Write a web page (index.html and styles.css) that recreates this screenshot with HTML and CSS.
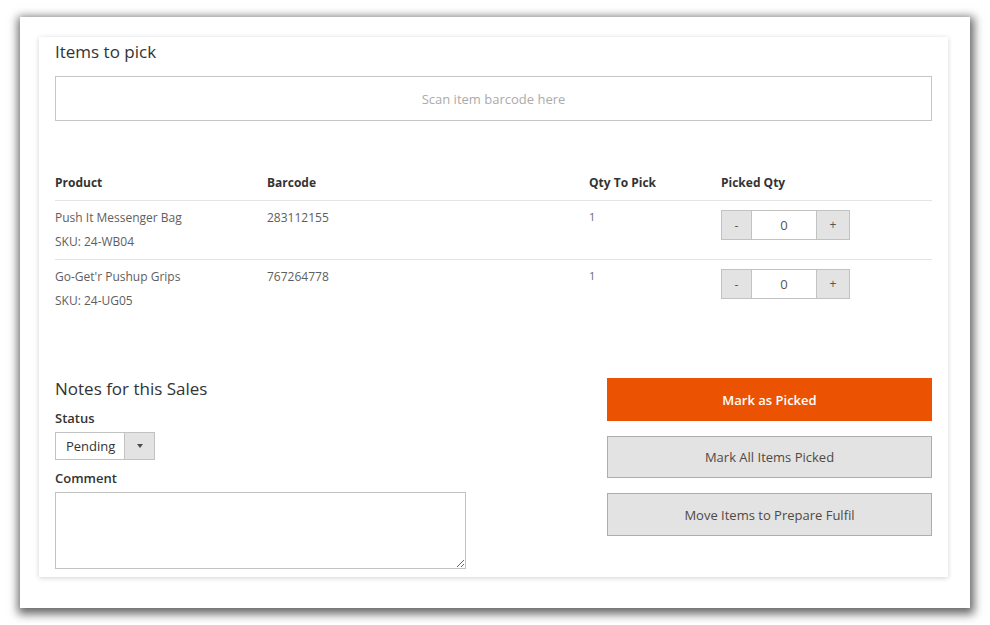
FILE: index.html
```html
<!DOCTYPE html>
<html lang="en">
<head>
<meta charset="utf-8">
<title>Items to pick</title>
<link rel="stylesheet" href="styles.css">
</head>
<body>
<div class="frame">
  <div class="card">
    <h2 class="title">Items to pick</h2>
    <input class="scan" type="text" placeholder="Scan item barcode here">

    <div class="items">
      <div class="th">Product</div>
      <div class="th">Barcode</div>
      <div class="th">Qty To Pick</div>
      <div class="th">Picked Qty</div>

      <div class="td first"><div>Push It Messenger Bag</div><div>SKU: 24-WB04</div></div>
      <div class="td first">283112155</div>
      <div class="td first qty">1</div>
      <div class="td first"><div class="stepper"><span class="step">-</span><span class="val">0</span><span class="step plus">+</span></div></div>

      <div class="td"><div>Go-Get'r Pushup Grips</div><div>SKU: 24-UG05</div></div>
      <div class="td">767264778</div>
      <div class="td qty">1</div>
      <div class="td"><div class="stepper"><span class="step">-</span><span class="val">0</span><span class="step plus">+</span></div></div>
    </div>

    <div class="bottom">
      <div class="notes">
        <h3 class="notes-title">Notes for this Sales</h3>
        <div class="label status-label">Status</div>
        <div class="select"><span class="select-text">Pending</span><span class="select-arrow"><i class="tri"></i></span></div>
        <div class="label comment-label">Comment</div>
        <textarea class="comment"></textarea>
      </div>
      <div class="actions">
        <button class="btn primary">Mark as Picked</button>
        <button class="btn mid">Mark All Items Picked</button>
        <button class="btn">Move Items to Prepare Fulfil</button>
      </div>
    </div>
  </div>
</div>
</body>
</html>
```

FILE: styles.css
```css
* { box-sizing: border-box; }
html, body { margin: 0; padding: 0; background: #ffffff; }
body {
  font-family: "Open Sans", "Liberation Sans", sans-serif;
  color: #333333;
  padding: 17px 20px 17px 20px;
  min-height: 625px;
}
.frame {
  width: 950px;
  height: 591px;
  background: #ffffff;
  box-shadow: 1px 3px 9px 3px rgba(0, 0, 0, 0.6);
  padding: 20px 22px 31px 19px;
}
.card {
  width: 909px;
  height: 540px;
  background: #ffffff;
  box-shadow: 0 1px 5px rgba(0, 0, 0, 0.18);
  padding: 5px 16px 8px 16px;
  display: flex;
  flex-direction: column;
}
.card > * { flex-shrink: 0; }
.title {
  margin: 0;
  font-size: 17px;
  line-height: 20px;
  font-weight: 400;
  color: #333333;
}
.scan {
  margin-top: 14px;
  width: 100%;
  height: 45px;
  border: 1px solid #c6c6c6;
  font-family: inherit;
  font-size: 13px;
  text-align: center;
  color: #333;
  outline: none;
}
.scan::placeholder { color: #ababab; }

.items {
  margin-top: 53px;
  display: grid;
  grid-template-columns: 212px 322px 132px 1fr;
}
.th {
  font-size: 12px;
  font-weight: 700;
  line-height: 18px;
  color: #333333;
  padding-bottom: 8px;
  border-bottom: 1px solid #e4e4e4;
}
.td {
  font-size: 12px;
  line-height: 24px;
  color: #5e5e5e;
  padding: 5px 0 5px 0;
  height: 58px;
}
.td.first {
  border-bottom: 1px solid #e4e4e4;
  height: 59px;
}
.td.qty { font-size: 11px; line-height: 22px; color: #6b6b6b; }
.stepper {
  display: flex;
  margin-top: 4px;
  height: 30px;
  width: 129px;
}
.step {
  width: 31px;
  height: 30px;
  background: #e3e3e3;
  border: 1px solid #c2c2c2;
  display: flex;
  align-items: center;
  justify-content: center;
  font-size: 12px;
  color: #555;
  padding-top: 2px;
}
.step.plus { width: 34px; padding-top: 0; }
.val {
  width: 64px;
  height: 30px;
  border-top: 1px solid #c2c2c2;
  border-bottom: 1px solid #c2c2c2;
  display: flex;
  align-items: center;
  justify-content: center;
  font-size: 13px;
  color: #555;
}

.bottom {
  margin-top: 59px;
  display: flex;
  justify-content: space-between;
}
.notes { width: 411px; display: flex; flex-direction: column; }
.notes-title {
  margin: 0;
  font-size: 17px;
  line-height: 24px;
  font-weight: 400;
  color: #333333;
}
.label {
  font-size: 13px;
  font-weight: 600;
  line-height: 18px;
  color: #333333;
}
.status-label { margin-top: 8px; }
.comment-label { margin-top: 9px; }
.select {
  margin-top: 5px;
  width: 100px;
  height: 28px;
  border: 1px solid #c2c2c2;
  display: flex;
}
.select-text {
  flex: 1;
  font-size: 13px;
  line-height: 26px;
  padding-left: 10px;
  color: #333;
}
.select-arrow {
  width: 30px;
  background: #e3e3e3;
  border-left: 1px solid #c2c2c2;
  display: flex;
  align-items: center;
  justify-content: center;
}
.tri {
  width: 0;
  height: 0;
  border-left: 3px solid transparent;
  border-right: 3px solid transparent;
  border-top: 4px solid #514943;
}
.comment {
  margin: 5px 0 0 0;
  width: 411px;
  height: 77px;
  border: 1px solid #c2c2c2;
  font-family: inherit;
  outline: none;
  resize: both;
}

.actions {
  width: 325px;
  margin-top: 1px;
  display: flex;
  flex-direction: column;
  gap: 15px;
}
.btn {
  height: 43px;
  width: 100%;
  border: 1px solid #adadad;
  background: #e3e3e3;
  color: #514943;
  font-family: inherit;
  font-size: 13px;
  font-weight: 400;
  padding: 0;
}
.btn.mid { height: 42px; }
.btn.primary {
  background: #eb5202;
  border-color: #eb5202;
  color: #ffffff;
  font-weight: 600;
}
```
